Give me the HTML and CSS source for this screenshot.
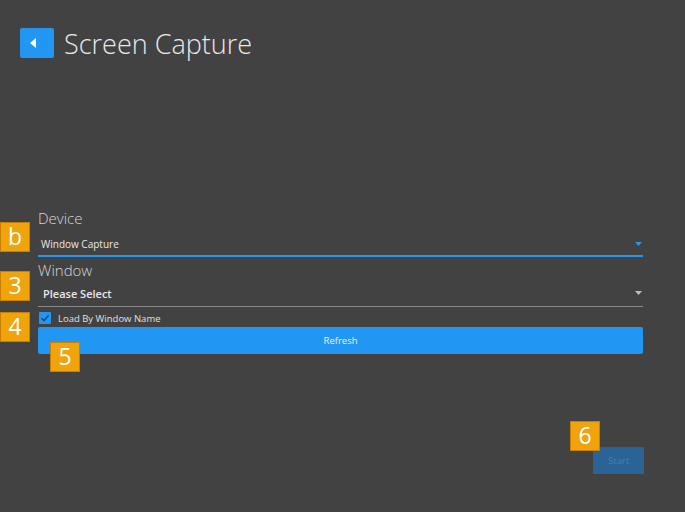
FILE: index.html
```html
<!DOCTYPE html>
<html>
<head>
<meta charset="utf-8">
<link rel="stylesheet" href="styles.css">
</head>
<body>
<div class="page">
  <header class="header">
    <div class="back">
      <svg width="10" height="12" viewBox="0 0 10 12"><path d="M8 1 L2 6 L8 11 Z" fill="#fff"/></svg>
    </div>
    <h1 class="title">Screen Capture</h1>
  </header>

  <section class="form">
    <div class="label">Device</div>
    <div class="field field-active">
      <span class="value">Window Capture</span>
      <svg class="arrow" width="7" height="4" viewBox="0 0 7 4"><path d="M0 0 H7 L3.5 4 Z" fill="#2196f3"/></svg>
    </div>
    <div class="label">Window</div>
    <div class="field field-idle">
      <span class="value value-bold">Please Select</span>
      <svg class="arrow" width="7" height="4" viewBox="0 0 7 4"><path d="M0 0 H7 L3.5 4 Z" fill="#bdbdbd"/></svg>
    </div>
    <label class="check">
      <span class="box">
        <svg width="10" height="10" viewBox="0 0 10 10"><path d="M1.5 5.2 L4 7.6 L8.6 2.4" fill="none" stroke="#2a3f55" stroke-width="1.4"/></svg>
      </span>
      <span class="check-text">Load By Window Name</span>
    </label>
    <button class="refresh">Refresh</button>
    <div class="actions">
      <button class="start">Start</button>
    </div>
  </section>

  <div class="badge b1">b</div>
  <div class="badge b3">3</div>
  <div class="badge b4">4</div>
  <div class="badge b5">5</div>
  <div class="badge b6">6</div>
</div>
</body>
</html>
```

FILE: styles.css
```css
html, body {
  margin: 0;
  padding: 0;
  background: #424242;
}
.page {
  position: relative;
  width: 685px;
  height: 512px;
  overflow: hidden;
  font-family: "Open Sans", "Noto Sans", sans-serif;
  color: #e6e6e6;
}
.header {
  display: flex;
  align-items: center;
  padding: 28px 0 0 20px;
  gap: 10px;
}
.back {
  width: 34px;
  height: 30px;
  background: #2196f3;
  border-radius: 2px;
  display: flex;
  align-items: center;
  justify-content: center;
}
.back svg { margin-left: -8px; }
.title {
  margin: 0;
  font-size: 27px;
  font-weight: 300;
  line-height: 30px;
  color: #e8e8e8;
  letter-spacing: 0;
  position: relative;
  top: 1px;
}
.form {
  margin: 150px 0 0 38px;
  width: 605px;
  display: flex;
  flex-direction: column;
}
.label {
  font-size: 15px;
  font-weight: 300;
  line-height: 20px;
  height: 20px;
  color: #d6d6d6;
}
.field {
  position: relative;
  height: 25px;
  display: flex;
  align-items: center;
  padding-left: 3px;
  margin-top: 2px;
}
.field-active {
  border-bottom: 2px solid #2196f3;
}
.field-idle {
  border-bottom: 1px solid #8a8a8a;
  height: 26px;
  margin-top: 0;
  margin-bottom: 0;
  padding-left: 5px;
}
.value {
  font-size: 10px;
  color: #e8e8e8;
  padding-top: 2px;
}
.value-bold {
  font-size: 11px;
  font-weight: 600;
  padding-top: 1px;
}
.arrow {
  position: absolute;
  right: 1px;
  top: 12px;
}
.field-idle .arrow { top: 11px; }
.label + .field-idle { margin-top: 0; }
.form .field-active + .label { margin-top: 3px; }
.check {
  display: flex;
  align-items: center;
  gap: 7px;
  height: 14px;
  margin-top: 4px;
  padding-left: 1px;
}
.box {
  width: 12px;
  height: 12px;
  background: #2196f3;
  border-radius: 1px;
  display: flex;
  align-items: center;
  justify-content: center;
}
.check-text {
  font-size: 9.5px;
  color: #e0e0e0;
}
.refresh {
  margin-top: 2px;
  height: 27px;
  border: none;
  border-radius: 2px;
  background: #2196f3;
  color: #e8f3fd;
  font-family: inherit;
  font-size: 9.5px;
  padding: 0;
}
.actions {
  display: flex;
  justify-content: flex-end;
  margin-top: 93px;
  padding-right: 0;
}
.start {
  width: 51px;
  height: 27px;
  border: none;
  border-radius: 1px;
  background: #2a6496;
  color: #4c7fab;
  font-family: inherit;
  font-size: 9.5px;
  padding: 0;
  margin-right: -1px;
}
.badge {
  position: absolute;
  width: 28px;
  height: 28px;
  background: #f0a30a;
  border: 1px solid #c97f00;
  color: #fff;
  font-family: "Open Sans", "Noto Sans", sans-serif;
  font-size: 23px;
  line-height: 27px;
  text-align: center;
}
.b1 { left: 0; top: 222px; }
.b3 { left: 0; top: 271px; }
.b4 { left: 0; top: 312px; }
.b5 { left: 50px; top: 342px; }
.b6 { left: 570px; top: 421px; }
```
